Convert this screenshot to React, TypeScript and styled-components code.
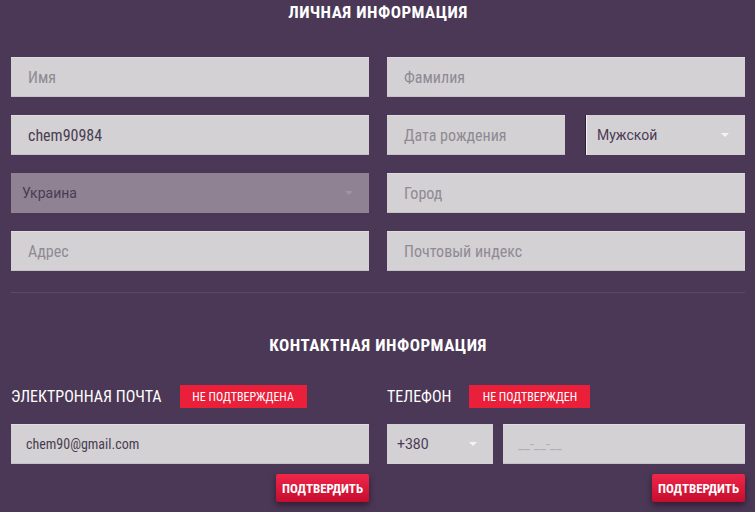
import styled, { createGlobalStyle } from 'styled-components';

const GlobalStyle = createGlobalStyle`
  html, body {
    margin: 0;
    padding: 0;
    background: #4b3856;
  }
  * {
    box-sizing: border-box;
  }
`;

const font = `"Roboto Condensed", "Liberation Sans Narrow", "Roboto", sans-serif`;
const plainFont = `"Roboto", "Liberation Sans", sans-serif`;

const Page = styled.div`
  width: 755px;
  height: 512px;
  overflow: hidden;
  padding: 0 10px 0 11px;
  background: #4b3856;
  font-family: ${font};
  color: #ffffff;
`;

const SectionTitle = styled.h2<{ $top?: number }>`
  margin: ${(p) => p.$top ?? 0}px 0 0;
  font-size: 17px;
  line-height: 24px;
  letter-spacing: 0.5px;
  font-weight: 700;
  text-align: center;
  text-transform: uppercase;
`;

const Grid = styled.div<{ $top: number }>`
  display: grid;
  grid-template-columns: 358px 358px;
  column-gap: 18px;
  row-gap: 18px;
  margin-top: ${(p) => p.$top}px;
`;

const Pair = styled.div<{ $cols: string; $gap: number }>`
  display: grid;
  grid-template-columns: ${(p) => p.$cols};
  column-gap: ${(p) => p.$gap}px;
`;

const Field = styled.div<{ $pad?: number; $size?: number; $muted?: boolean; $faint?: boolean }>`
  height: 40px;
  display: flex;
  align-items: center;
  padding-left: ${(p) => p.$pad ?? 17}px;
  background: #d3d1d4;
  border-top: 1px solid #dedce0;
  border-bottom: 1px solid #c4c1c7;
  font-size: ${(p) => p.$size ?? 16}px;
  color: ${(p) => (p.$faint ? '#b3aeb6' : p.$muted ? '#8f8a93' : '#4a3d52')};
  white-space: nowrap;
`;

const SelectBox = styled.div<{ $disabled?: boolean; $edge?: boolean; $pad?: number }>`
  position: relative;
  height: 40px;
  display: flex;
  align-items: center;
  padding-left: ${(p) => p.$pad ?? 11}px;
  background: ${(p) => (p.$disabled ? '#8f8393' : '#d3d1d4')};
  border-left: ${(p) => (p.$edge ? '1px solid #2c2133' : 'none')};
  box-shadow: ${(p) => (p.$edge ? 'inset 1px 0 0 #f2f0f3' : 'none')};
  font-family: ${plainFont};
  font-size: 14px;
  color: #4a3b54;
`;

const Caret = styled.span<{ $dim?: boolean }>`
  position: absolute;
  right: 16px;
  top: 18px;
  width: 0;
  height: 0;
  border-left: 4px solid transparent;
  border-right: 4px solid transparent;
  border-top: 4px solid ${(p) => (p.$dim ? '#a194a4' : '#f4f3f5')};
`;

const Divider = styled.hr`
  margin: 21px 0 0;
  border: none;
  height: 1px;
  background: #5b4966;
`;

const Column = styled.div`
  display: flex;
  flex-direction: column;
`;

const LabelRow = styled.div`
  display: flex;
  align-items: center;
  gap: 18px;
  height: 23px;
  margin-bottom: 16px;
`;

const Label = styled.span`
  font-size: 16px;
  text-transform: uppercase;
  color: #ffffff;
`;

const Badge = styled.span<{ $w: number }>`
  width: ${(p) => p.$w}px;
  height: 23px;
  display: flex;
  align-items: center;
  justify-content: center;
  background: #ea1f39;
  font-size: 12px;
  color: #ffffff;
  text-transform: uppercase;
`;

const Actions = styled.div`
  display: flex;
  justify-content: flex-end;
  margin-top: 10px;
`;

const ConfirmButton = styled.button`
  width: 93px;
  height: 28px;
  border: none;
  border-radius: 2px;
  background: linear-gradient(#f0264a, #c40d2e);
  box-shadow: 0 3px 6px rgba(20, 5, 20, 0.55);
  font-family: ${font};
  font-size: 13px;
  font-weight: 700;
  color: #ffffff;
  text-transform: uppercase;
  padding: 0;
`;

export default function App() {
  return (
    <>
      <GlobalStyle />
      <Page>
        <SectionTitle>Личная информация</SectionTitle>
        <Grid $top={33}>
          <Field $muted>Имя</Field>
          <Field $muted>Фамилия</Field>
          <Field>chem90984</Field>
          <Pair $cols="178px 160px" $gap={20}>
            <Field $muted>Дата рождения</Field>
            <SelectBox $edge>
              Мужской
              <Caret />
            </SelectBox>
          </Pair>
          <SelectBox $disabled>
            Украина
            <Caret $dim />
          </SelectBox>
          <Field $muted>Город</Field>
          <Field $muted>Адрес</Field>
          <Field $muted>Почтовый индекс</Field>
        </Grid>
        <Divider />
        <SectionTitle $top={40}>Контактная информация</SectionTitle>
        <Grid $top={28}>
          <Column>
            <LabelRow>
              <Label>Электронная почта</Label>
              <Badge $w={127}>Не подтверждена</Badge>
            </LabelRow>
            <Field $pad={15} $size={14}>chem90@gmail.com</Field>
            <Actions>
              <ConfirmButton>Подтвердить</ConfirmButton>
            </Actions>
          </Column>
          <Column>
            <LabelRow>
              <Label>Телефон</Label>
              <Badge $w={121}>Не подтвержден</Badge>
            </LabelRow>
            <Pair $cols="106px 242px" $gap={10}>
              <SelectBox $pad={10}>
                +380
                <Caret />
              </SelectBox>
              <Field $pad={15} $size={15} $faint>
                __-__-__
              </Field>
            </Pair>
            <Actions>
              <ConfirmButton>Подтвердить</ConfirmButton>
            </Actions>
          </Column>
        </Grid>
      </Page>
    </>
  );
}
